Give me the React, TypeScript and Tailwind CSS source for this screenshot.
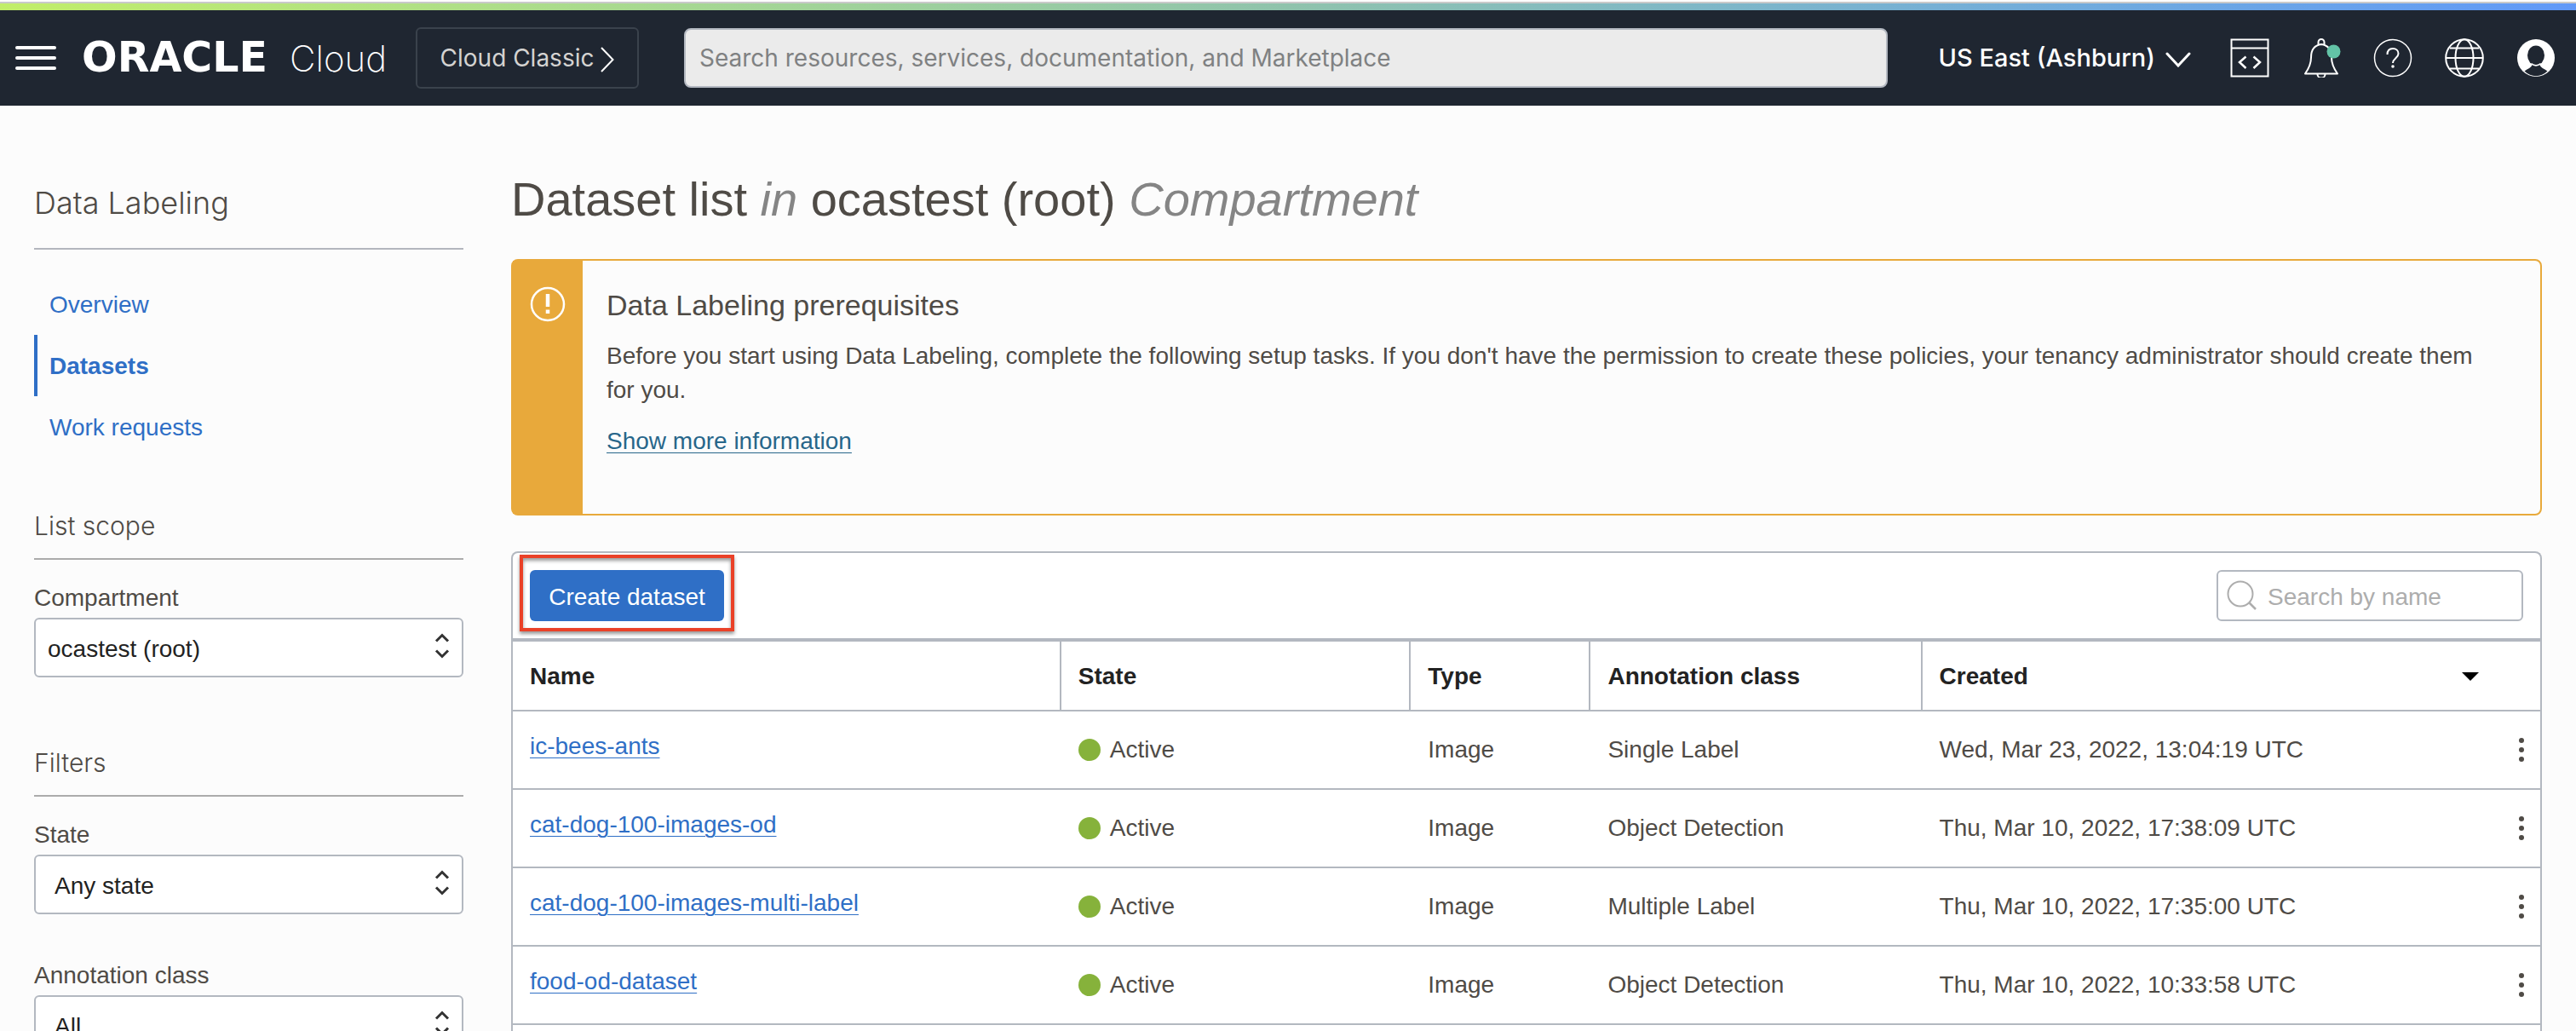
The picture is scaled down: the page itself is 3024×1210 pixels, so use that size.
import type { ReactNode } from "react";

const HELV = "font-['Liberation_Sans',Arial,sans-serif]";

type Dataset = { name: string; state: string; type: string; annotation: string; created: string };

const datasets: Dataset[] = [
  { name: "ic-bees-ants", state: "Active", type: "Image", annotation: "Single Label", created: "Wed, Mar 23, 2022, 13:04:19 UTC" },
  { name: "cat-dog-100-images-od", state: "Active", type: "Image", annotation: "Object Detection", created: "Thu, Mar 10, 2022, 17:38:09 UTC" },
  { name: "cat-dog-100-images-multi-label", state: "Active", type: "Image", annotation: "Multiple Label", created: "Thu, Mar 10, 2022, 17:35:00 UTC" },
  { name: "food-od-dataset", state: "Active", type: "Image", annotation: "Object Detection", created: "Thu, Mar 10, 2022, 10:33:58 UTC" },
];

function IconButton({ label, children }: { label: string; children: ReactNode }) {
  return (
    <button type="button" aria-label={label} className="shrink-0">
      <svg viewBox="0 0 46 46" className="block size-[46px]" fill="none" stroke="white" strokeWidth="2">
        {children}
      </svg>
    </button>
  );
}

function Header() {
  return (
    <header className="font-[Inter,sans-serif]">
      <div className="h-1 border-b-2 border-[#c9c9c9] bg-white" />
      <div className="h-2 bg-linear-to-r from-[#c1ee68] via-[#8fc3ac] to-[#6199f8]" />
      <div className="flex h-28 items-center bg-[#1f2631] pr-6 pl-[18px]">
        <button type="button" aria-label="Open navigation menu" className="flex shrink-0 flex-col gap-2">
          <span className="h-1 w-12 rounded-sm bg-white" />
          <span className="h-1 w-12 rounded-sm bg-white" />
          <span className="h-1 w-12 rounded-sm bg-white" />
        </button>
        <a href="#home" className="ml-[30px] flex w-[358px] shrink-0 items-baseline justify-between whitespace-nowrap text-white">
          <span className="font-['DejaVu_Sans',sans-serif] text-[49px] leading-[56px] font-bold">ORACLE</span>
          <span className="text-[42px] leading-[56px] font-extralight">Cloud</span>
        </a>
        <button
          type="button"
          className="ml-[34px] flex h-[72px] w-[262px] shrink-0 items-center justify-center gap-2 rounded-md border-2 border-[#3a424c] text-[28px] text-[#d4d3d1]"
        >
          Cloud Classic
          <svg viewBox="0 0 16 30" className="mt-1 h-[30px] w-4" fill="none" stroke="white" strokeWidth="2">
            <path d="M1 1 14.500 15 1 29" />
          </svg>
        </button>
        <input
          type="search"
          aria-label="Search"
          placeholder="Search resources, services, documentation, and Marketplace"
          className="ml-[53px] h-[70px] min-w-0 flex-1 rounded-lg border-2 border-[#b3b8c1] bg-[#ebebeb] px-4 text-[28px] text-[#222] outline-none placeholder:text-[#7f8182]"
        />
        <button type="button" className="ml-[60px] flex shrink-0 items-center gap-3 text-[29px] font-medium text-white">
          US East (Ashburn)
          <svg viewBox="0 0 30 18" className="mt-1 h-[18px] w-[30px]" fill="none" stroke="white" strokeWidth="3" strokeLinecap="round">
            <path d="M2 2 15 16 28 2" />
          </svg>
        </button>
        <div className="ml-[46px] flex items-center gap-[38px]">
          <IconButton label="Developer tools">
            <path d="M1.500 1.500h43v43h-43zM1.500 11.500h43" />
            <path d="M18.500 21.500 11 28l7.500 7M27.500 21.500 35 28l-7.500 7" strokeWidth="2.500" />
          </IconButton>
          <IconButton label="Announcements">
            <path d="M4 41.500c5-7 7-11.500 7-19 0-9 4-14.500 12-15.500 8 1 12 6.500 12 15.500 0 7.500 2 12 7 19z" strokeLinejoin="round" />
            <path d="M19.500 7V4.500a3.500 3.500 0 0 1 7 0V7M18.500 42a4.500 4.500 0 0 0 9 0" />
            <circle cx="37.500" cy="15.500" r="8" fill="#63c3a7" stroke="none" />
          </IconButton>
          <IconButton label="Help">
            <circle cx="23" cy="23" r="21.500" strokeWidth="1.500" />
            <path d="M16.500 19c0-4.500 2.500-7 6.500-7s6.500 2.500 6.500 6c0 5-6.500 5.500-6.500 11" />
            <circle cx="23" cy="33" r="1.800" fill="white" stroke="none" />
          </IconButton>
          <IconButton label="Language">
            <circle cx="23" cy="23" r="21.800" />
            <ellipse cx="23" cy="23" rx="10.500" ry="21.800" />
            <path d="M1.200 23h43.600M6 11.500h34M6 35.500h34" />
          </IconButton>
          <IconButton label="Profile">
            <circle cx="23" cy="23" r="22" fill="white" stroke="none" />
            <ellipse cx="23" cy="20" rx="10" ry="11.500" fill="#1f2631" stroke="none" />
            <path d="M9.500 38.500c4-3 8-3.500 9.500-8.500 2.500 2.500 5.500 2.500 8 0 1.500 5 5.500 5.500 9.500 8.500-8 7.500-19 7.500-27 0z" fill="#1f2631" stroke="none" />
            <path d="M17.500 29.500c3.500 3 7.500 3 11 0" strokeWidth="1.500" />
          </IconButton>
        </div>
      </div>
    </header>
  );
}

function SectionTitle({ children }: { children: ReactNode }) {
  return (
    <h2 className="border-b-2 border-[#ababab] pb-[18px] font-[Inter,sans-serif] text-[30px] leading-10 font-light text-[#4f4b46]">
      {children}
    </h2>
  );
}

function SelectField({ id, label, value, inset }: { id: string; label: string; value: string; inset?: boolean }) {
  return (
    <div className="flex flex-col">
      <label htmlFor={id} className="mb-[3px] leading-10">
        {label}
      </label>
      <div className="relative">
        <select
          id={id}
          className={
            "block h-[70px] w-full appearance-none rounded-md border-2 border-[#b3b8c0] bg-white pt-1 pr-12 text-[28px] text-[#222] outline-none " +
            (inset ? "pl-[22px]" : "pl-[14px]")
          }
        >
          <option>{value}</option>
        </select>
        <svg
          viewBox="0 0 18 32"
          className="pointer-events-none absolute top-[17px] right-4 h-8 w-[18px]"
          fill="none"
          stroke="#333"
          strokeWidth="3"
        >
          <path d="M2 10.500 9 3.500l7 7M2 21.500l7 7 7-7" />
        </svg>
      </div>
    </div>
  );
}

const navLink = "border-l-4 pt-[2px] pl-[14px] leading-[70px]";

function Sidebar() {
  return (
    <aside className="w-[504px] shrink-0 pt-[90px]">
      <h2 className="border-b-2 border-[#b3b6be] pb-[29px] font-[Inter,sans-serif] text-[36px] leading-[48px] font-light text-[#4f4b46]">
        Data Labeling
      </h2>
      <nav className="mt-7 flex flex-col text-[#2f6fc6]">
        <a href="#overview" className={navLink + " border-transparent"}>
          Overview
        </a>
        <a href="#datasets" aria-current="page" className={navLink + " border-[#2f6fc6] font-bold"}>
          Datasets
        </a>
        <a href="#work-requests" className={navLink + " border-transparent"}>
          Work requests
        </a>
      </nav>
      <section className="mt-[60px]">
        <SectionTitle>List scope</SectionTitle>
        <div className="mt-[25px]">
          <SelectField id="compartment" label="Compartment" value="ocastest (root)" />
        </div>
      </section>
      <section className="mt-20">
        <SectionTitle>Filters</SectionTitle>
        <div className="mt-[25px] flex flex-col gap-[52px]">
          <SelectField id="state" label="State" value="Any state" inset />
          <SelectField id="annotation-class" label="Annotation class" value="All" inset />
        </div>
      </section>
    </aside>
  );
}

function Prerequisites() {
  return (
    <section className="mt-[38px] flex shrink-0 rounded-lg border-2 border-[#e8a93b] bg-[#fcfcfc]">
      <div className="flex w-[82px] shrink-0 justify-center bg-[#e8a93b] pt-[30px]">
        <svg viewBox="0 0 42 42" className="size-[42px]" fill="none" stroke="white" strokeWidth="2.500">
          <circle cx="21" cy="21" r="19" />
          <path d="M21 9v15M21 27.500v4.500" strokeWidth="4.500" />
        </svg>
      </div>
      <div className="pt-8 pr-12 pb-16 pl-7">
        <h2 className="text-[34px] leading-10">Data Labeling prerequisites</h2>
        <p className="mt-5 leading-10">
          Before you start using Data Labeling, complete the following setup tasks. If you don't have the permission to create these
          policies, your tenancy administrator should create them for you.
        </p>
        <a
          href="#more"
          className="mt-5 inline-block leading-10 text-[#27668a] underline decoration-1 underline-offset-4"
        >
          Show more information
        </a>
      </div>
    </section>
  );
}

const th = "h-[82px] border-b-2 border-[#b3b8c0] pt-[2px] text-left font-bold text-[#222]";
const td = "h-[92px] border-b-2 border-[#b3b8c0] py-0";

function DatasetTable() {
  return (
    <section className="mt-[42px] flex-1 rounded-t-lg border-2 border-b-0 border-[#b3b8c0] bg-white">
      <div className="flex items-center justify-between border-b-4 border-[#b3b8c0] p-5">
        <div className="relative">
          <button type="button" className="block h-[60px] w-[228px] rounded-md bg-[#2f6fc6] pt-1 text-white">
            Create dataset
          </button>
          <div className="pointer-events-none absolute -inset-x-3 -top-[18px] -bottom-3 border-4 border-[#ea4128] shadow-[0_3px_4px_rgba(0,0,0,0.4),inset_0_3px_4px_rgba(0,0,0,0.4)]" />
        </div>
        <div className="relative">
          <svg
            viewBox="0 0 36 36"
            className="pointer-events-none absolute top-3 left-3 size-9"
            fill="none"
            stroke="#adadad"
            strokeWidth="2"
          >
            <circle cx="16" cy="16" r="14.500" />
            <path d="m26 26 8 8" strokeWidth="2.500" />
          </svg>
          <input
            type="search"
            aria-label="Search by name"
            placeholder="Search by name"
            className="block h-[60px] w-[360px] rounded-md border-2 border-[#b3b8c0] bg-transparent pt-1 pr-4 pl-[58px] text-[#222] outline-none placeholder:text-[#adadad]"
          />
        </div>
      </div>
      <table className="w-full table-fixed border-separate border-spacing-0">
        <thead>
          <tr>
            <th scope="col" className={th + " w-[27.05%] border-r-2 pl-5"}>Name</th>
            <th scope="col" className={th + " w-[17.25%] border-r-2 pl-5"}>State</th>
            <th scope="col" className={th + " w-[8.87%] border-r-2 pl-5"}>Type</th>
            <th scope="col" className={th + " w-[16.35%] border-r-2 pl-5"}>Annotation class</th>
            <th scope="col" aria-sort="descending" className={th + " pl-5"}>
              <button type="button" className="flex w-full items-center justify-between text-left font-bold">
                Created
                <svg viewBox="0 0 20 10" className="h-[10px] w-5" fill="black">
                  <path d="M0 0h20L10 10z" />
                </svg>
              </button>
            </th>
            <th scope="col" aria-label="Actions" className={th + " w-[72px]"} />
          </tr>
        </thead>
        <tbody>
          {datasets.map((d) => (
            <tr key={d.name}>
              <td className={td + " pb-2 pl-5"}>
                <a href={"#" + d.name} className="text-[#2f6fc6] underline decoration-1 underline-offset-4">
                  {d.name}
                </a>
              </td>
              <td className={td + " pl-5"}>
                <span className="flex items-center gap-[11px]">
                  <span className="size-[26px] rounded-full bg-[#86b23b]" />
                  {d.state}
                </span>
              </td>
              <td className={td + " pl-5"}>{d.type}</td>
              <td className={td + " pl-5"}>{d.annotation}</td>
              <td className={td + " pl-5"}>{d.created}</td>
              <td className={td + " pr-[19px]"}>
                <button type="button" aria-label={"Actions for " + d.name} className="ml-auto flex flex-col gap-[5px]">
                  <span className="size-[6px] rounded-full bg-[#4f4b46]" />
                  <span className="size-[6px] rounded-full bg-[#4f4b46]" />
                  <span className="size-[6px] rounded-full bg-[#4f4b46]" />
                </button>
              </td>
            </tr>
          ))}
        </tbody>
      </table>
    </section>
  );
}

export default function App() {
  return (
    <div className={"flex h-screen flex-col overflow-hidden bg-[#fcfcfc] text-[28px] text-[#4f4b46] " + HELV}>
      <Header />
      <div className="flex min-h-0 flex-1 gap-14 px-10">
        <Sidebar />
        <main className="flex min-w-0 flex-1 flex-col pt-[78px]">
          <h1 className="text-[56px] leading-[64px]">
            Dataset list <em className="text-[#858585]">in</em> ocastest (root) <em className="text-[#858585]">Compartment</em>
          </h1>
          <Prerequisites />
          <DatasetTable />
        </main>
      </div>
    </div>
  );
}
